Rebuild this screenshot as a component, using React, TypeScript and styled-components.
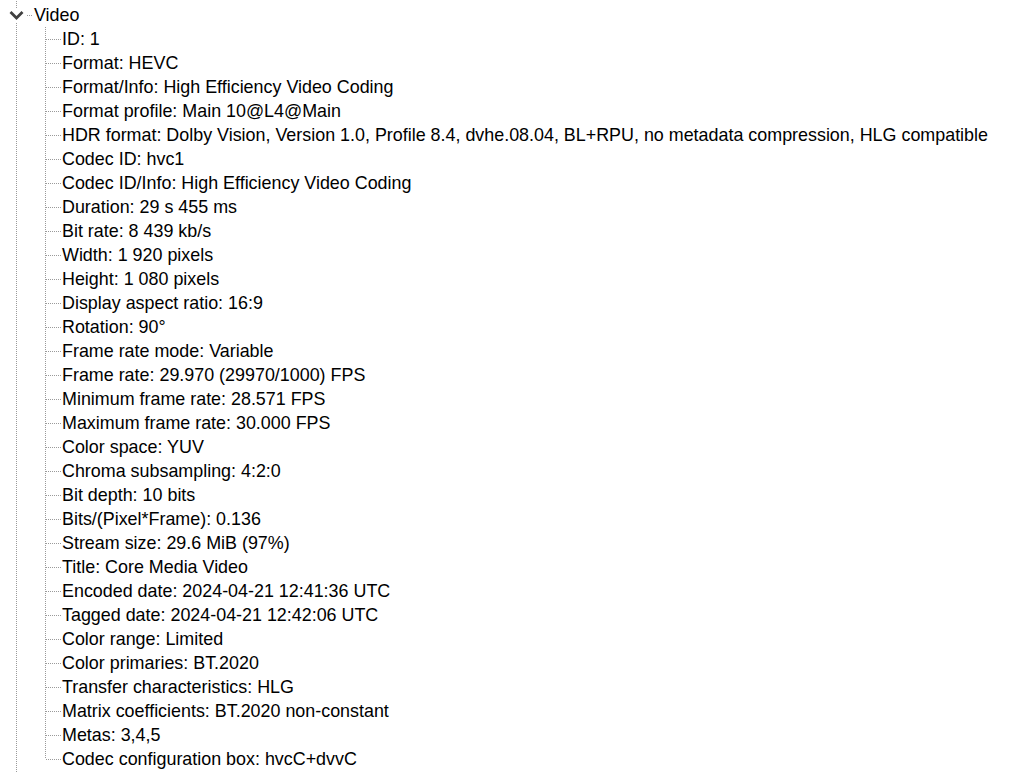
import React from "react";
import styled, { createGlobalStyle } from "styled-components";

const Global = createGlobalStyle`
  html, body { margin: 0; padding: 0; background: #ffffff; }
  body { font-family: "Liberation Sans", Arial, sans-serif; font-size: 17.9px; color: #000; overflow: hidden; }
`;

const dotV = `linear-gradient(to bottom, #9a9a9a 50%, transparent 50%) 0 0 / 1px 2px repeat-y`;
const dotH = `linear-gradient(to right, #9a9a9a 50%, transparent 50%) 0 0 / 2px 1px repeat-x`;

const Tree = styled.div`
  position: relative;
  margin-top: -21px;
  height: 800px;
  &::before {
    content: "";
    position: absolute;
    left: 16px;
    top: 0;
    bottom: 0;
    width: 1px;
    background: ${dotV};
  }
`;

const Children = styled.div`
  position: relative;
  padding-left: 62px;
  &::before {
    content: "";
    position: absolute;
    left: 45px;
    top: 0;
    bottom: 12px;
    width: 1px;
    background: ${dotV};
  }
`;

const Row = styled.div<{ $tight?: boolean }>`
  position: relative;
  height: 24px;
  line-height: ${(p) => (p.$tight ? "22px" : "24px")};
  white-space: nowrap;
  &::before {
    content: "";
    position: absolute;
    left: -16px;
    top: 12px;
    width: 15px;
    height: 1px;
    background: ${dotH};
  }
`;

const GroupRow = styled.div`
  position: relative;
  height: 24px;
  line-height: 24px;
  display: flex;
  align-items: center;
  padding-left: 8px;
  white-space: nowrap;
`;

const Toggle = styled.span`
  position: relative;
  z-index: 1;
  display: flex;
  align-items: center;
  justify-content: center;
  width: 16px;
  height: 14px;
  background: #fff;
`;

const Connector = styled.span`
  width: 5px;
  height: 1px;
  margin: 0 2px 0 3px;
  background: ${dotH};
`;

const Label = styled.span``;

const items = [
  "ID: 1",
  "Format: HEVC",
  "Format/Info: High Efficiency Video Coding",
  "Format profile: Main 10@L4@Main",
  "HDR format: Dolby Vision, Version 1.0, Profile 8.4, dvhe.08.04, BL+RPU, no metadata compression, HLG compatible",
  "Codec ID: hvc1",
  "Codec ID/Info: High Efficiency Video Coding",
  "Duration: 29 s 455 ms",
  "Bit rate: 8 439 kb/s",
  "Width: 1 920 pixels",
  "Height: 1 080 pixels",
  "Display aspect ratio: 16:9",
  "Rotation: 90°",
  "Frame rate mode: Variable",
  "Frame rate: 29.970 (29970/1000) FPS",
  "Minimum frame rate: 28.571 FPS",
  "Maximum frame rate: 30.000 FPS",
  "Color space: YUV",
  "Chroma subsampling: 4:2:0",
  "Bit depth: 10 bits",
  "Bits/(Pixel*Frame): 0.136",
  "Stream size: 29.6 MiB (97%)",
  "Title: Core Media Video",
  "Encoded date: 2024-04-21 12:41:36 UTC",
  "Tagged date: 2024-04-21 12:42:06 UTC",
  "Color range: Limited",
  "Color primaries: BT.2020",
  "Transfer characteristics: HLG",
  "Matrix coefficients: BT.2020 non-constant",
  "Metas: 3,4,5",
  "Codec configuration box: hvcC+dvvC",
];

const Chevron = () => (
  <svg width="15" height="10" viewBox="0 0 15 10">
    <polyline points="1.5,2 7.5,8 13.5,2" fill="none" stroke="#404040" strokeWidth="2.8" />
  </svg>
);

export default function App() {
  return (
    <>
      <Global />
      <Tree>
        <Children>
          <Row $tight>com.apple.quicktime.creationdate: 2024-04-21T14:41:36+0200</Row>
        </Children>
        <GroupRow>
          <Toggle>
            <Chevron />
          </Toggle>
          <Connector />
          <Label>Video</Label>
        </GroupRow>
        <Children>
          {items.map((t) => (
            <Row key={t}>{t}</Row>
          ))}
        </Children>
      </Tree>
    </>
  );
}
